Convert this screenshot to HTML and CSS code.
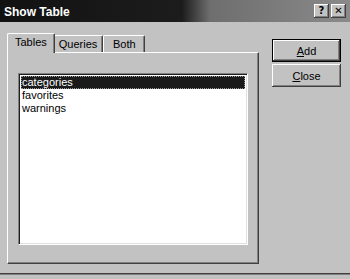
FILE: index.html
```html
<!DOCTYPE html>
<html lang="en">

<head>
    <meta charset="UTF-8">
    <meta name="viewport" content="width=device-width, initial-scale=1.0">
    <title>Show Table</title>
    <link rel="stylesheet" href="styles.css">
</head>

<body>
    <div class="window">
        <!-- Title bar -->
        <div class="titlebar">
            <span class="title">Show Table</span>
            <div class="title-buttons">
                <button class="tbtn">?</button>
                <button class="tbtn">&#x2715;</button>
            </div>
        </div>

        <div class="main">
            <!-- Tabs + list -->
            <div class="left">
                <div class="tabs">
                    <div class="tab active">Tables</div>
                    <div class="tab">Queries</div>
                    <div class="tab">Both</div>
                </div>
                <div class="panel">
                    <div class="listbox">
                        <div class="row selected">categories</div>
                        <div class="row">favorites</div>
                        <div class="row">warnings</div>
                    </div>
                </div>
            </div>

            <!-- Command buttons -->
            <div class="actions">
                <button class="btn default"><u>A</u>dd</button>
                <button class="btn"><u>C</u>lose</button>
            </div>
        </div>

        <div class="footer"></div>
    </div>
</body>

</html>
```

FILE: styles.css
```css
body {
    margin: 0;
    background-color: #c2c2c2;
    font-family: "Liberation Sans", Arial, sans-serif;
    font-size: 11px;
    color: #000;
}

.window {
    width: 350px;
    height: 279px;
    display: flex;
    flex-direction: column;
    overflow: hidden;
}

/* Title bar */
.titlebar {
    height: 22px;
    display: flex;
    align-items: center;
    justify-content: space-between;
    padding: 0 4px 0 4px;
    background: linear-gradient(to right, #121212 0%, #1c1c1c 52%, #6e6e6e 60%, #8a8a8a 100%);
}

.title {
    color: #fff;
    font-weight: bold;
    font-size: 12px;
    margin-top: 1px;
}

.title-buttons {
    display: flex;
    gap: 2px;
}

.tbtn {
    width: 15px;
    height: 14px;
    padding: 0;
    margin: 0;
    background-color: #c2c2c2;
    border: none;
    box-shadow: inset -1px -1px #404040, inset 1px 1px #fff, inset -2px -2px #808080;
    font-family: "DejaVu Sans", sans-serif;
    font-size: 10px;
    font-weight: bold;
    line-height: 14px;
    color: #000;
}

/* Main area */
.main {
    display: flex;
    padding: 11px 0 0 7px;
}

.left {
    width: 252px;
    display: flex;
    flex-direction: column;
}

.tabs {
    display: flex;
    height: 19px;
    align-items: flex-end;
    padding-left: 2px;
}

.tab {
    height: 17px;
    min-width: 42px;
    box-sizing: border-box;
    text-align: center;
    line-height: 16px;
    padding: 0 5px;
    border-top: 1px solid #fff;
    border-left: 1px solid #fff;
    border-right: 1px solid #404040;
    box-shadow: inset -1px 0 #808080;
    border-radius: 2px 2px 0 0;
}

.tab.active {
    height: 20px;
    margin: 0 -2px -1px -2px;
    padding: 0 7px;
    line-height: 17px;
    background-color: #c2c2c2;
    position: relative;
    z-index: 1;
}

.panel {
    height: 212px;
    border-top: 1px solid #fff;
    border-left: 1px solid #fff;
    border-right: 1px solid #404040;
    border-bottom: 1px solid #404040;
    box-shadow: inset -1px -1px #808080;
    padding: 20px 0 0 10px;
    box-sizing: border-box;
}

.listbox {
    width: 230px;
    height: 172px;
    box-sizing: border-box;
    background-color: #fff;
    border-top: 1px solid #808080;
    border-left: 1px solid #808080;
    border-right: 1px solid #fff;
    border-bottom: 1px solid #fff;
    box-shadow: inset 1px 1px #202020, inset -1px -1px #dfdfdf;
    padding: 2px 2px;
}

.row {
    height: 13px;
    line-height: 13px;
    padding-left: 1px;
}

.row.selected {
    background-color: #1a1a1a;
    color: #fff;
    outline: 1px dotted #9a9a9a;
    outline-offset: -1px;
}

/* Command buttons */
.actions {
    display: flex;
    flex-direction: column;
    gap: 2px;
    margin: 6px 0 0 13px;
}

.btn {
    width: 69px;
    height: 23px;
    padding: 0;
    background-color: #c2c2c2;
    border: none;
    box-shadow: inset -1px -1px #404040, inset 1px 1px #fff, inset -2px -2px #808080;
    font-family: "Liberation Sans", Arial, sans-serif;
    font-size: 11px;
    color: #000;
}

.btn.default {
    border: 1px solid #000;
}

.footer {
    margin-top: auto;
    height: 5px;
    border-top: 1px solid #404040;
    box-shadow: inset 0 1px #808080;
}
```
